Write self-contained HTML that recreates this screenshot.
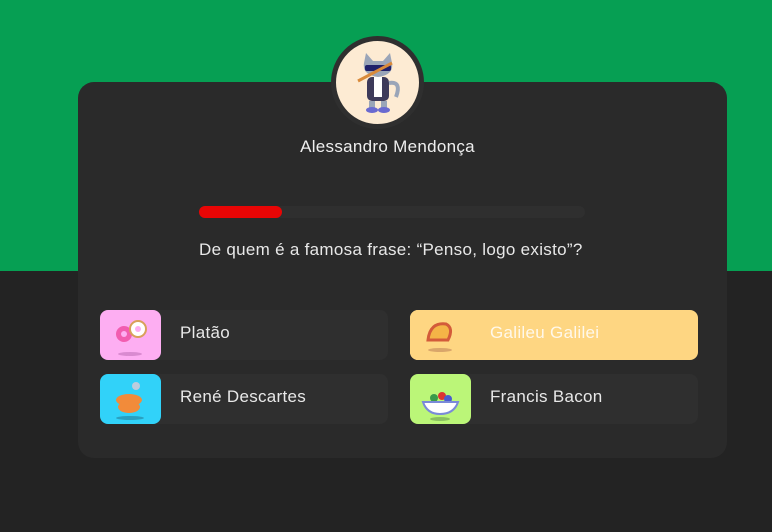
<!DOCTYPE html>
<html><head><meta charset="utf-8"><style>
*{margin:0;padding:0;box-sizing:border-box}
body{width:772px;height:532px;background:#232323;position:relative;overflow:hidden;font-family:"Liberation Sans",sans-serif;letter-spacing:0.3px}
.green{position:absolute;left:0;top:0;width:772px;height:271px;background:#069f53}
.card{position:absolute;left:78px;top:82px;width:649px;height:376px;background:#2a2a2a;border-radius:16px}
.av{position:absolute;left:331px;top:36px;width:93px;height:93px;border-radius:50%;background:#fdebd3;border:5px solid #2f2f2f}
.name{position:absolute;left:0;width:772px;top:137px;padding-left:3px;text-align:center;color:#eee;font-size:17px}
.bar{position:absolute;left:199px;top:206px;width:386px;height:12px;border-radius:6px;background:#2f2f2f}
.bar i{position:absolute;left:0;top:0;width:83px;height:12px;border-radius:6px;background:#e80505}
.q{position:absolute;left:199px;top:240px;color:#e8e8e8;font-size:17px;white-space:nowrap}
.opt{position:absolute;width:288px;height:50px;border-radius:8px;background:#2f2f2f;color:#e8e8e8;font-size:17px}
.opt .ic{position:absolute;left:0;top:0;width:61px;height:50px;border-radius:8px}
.opt span{position:absolute;left:80px;top:13px}
</style></head><body>
<div class="green"></div>
<div class="card"></div>
<div class="av"><svg width="83" height="83" viewBox="0 0 83 83">
<path d="M28 22 L30 12 L37 20 L47 20 L54 12 L56 22 Q58 34 42 36 Q26 34 28 22Z" fill="#9aa5b8"/>
<rect x="29" y="24" width="26" height="6" rx="2" fill="#20206a"/>
<rect x="31" y="36" width="22" height="24" rx="5" fill="#3d3a5a"/>
<rect x="38" y="36" width="8" height="20" fill="#fff"/>
<rect x="33" y="60" width="6" height="8" fill="#9aa5b8"/><rect x="45" y="60" width="6" height="8" fill="#9aa5b8"/>
<ellipse cx="36" cy="69" rx="6" ry="3" fill="#6a6ad0"/><ellipse cx="48" cy="69" rx="6" ry="3" fill="#6a6ad0"/>
<path d="M53 42 Q66 40 60 56" stroke="#9aa5b8" stroke-width="4" fill="none"/>
<line x1="22" y1="40" x2="56" y2="22" stroke="#d98a3a" stroke-width="3"/>
</svg></div>
<div class="name">Alessandro Mendonça</div>
<div class="bar"><i></i></div>
<div class="q">De quem é a famosa frase: “Penso, logo existo”?</div>
<div class="opt" style="left:100px;top:310px"><div class="ic" style="background:#fdaef2"><svg width="61" height="50"><circle cx="24" cy="24" r="8" fill="#f25db0"/><circle cx="24" cy="24" r="3" fill="#fdaef2"/><circle cx="38" cy="19" r="8" fill="#fff" stroke="#d9a05a" stroke-width="2"/><circle cx="38" cy="19" r="3" fill="#fdaef2"/><ellipse cx="30" cy="44" rx="12" ry="2" fill="#d98ad0"/></svg></div><span>Platão</span></div>
<div class="opt" style="left:410px;top:310px;background:#fed682"><div class="ic" style="background:#fed682"><svg width="61" height="50"><path d="M18 30 Q20 12 36 14 Q44 18 38 30 Z" fill="#f4b447" stroke="#d35b3a" stroke-width="3"/><ellipse cx="30" cy="40" rx="12" ry="2" fill="#d9a66a"/></svg></div><span style="color:#fff8ea">Galileu Galilei</span></div>
<div class="opt" style="left:100px;top:374px"><div class="ic" style="background:#31d2f9"><svg width="61" height="50"><ellipse cx="29" cy="26" rx="13" ry="6" fill="#f28b3a"/><ellipse cx="29" cy="33" rx="11" ry="6" fill="#f28b3a"/><circle cx="36" cy="12" r="4" fill="#bcd"/><ellipse cx="30" cy="44" rx="14" ry="2" fill="#2aa0c0"/></svg></div><span>René Descartes</span></div>
<div class="opt" style="left:410px;top:374px"><div class="ic" style="background:#bbf678"><svg width="61" height="50"><circle cx="24" cy="24" r="4" fill="#3a9a4a"/><circle cx="32" cy="22" r="4" fill="#d33"/><circle cx="38" cy="25" r="4" fill="#4a5acf"/><path d="M13 28 H48 Q44 40 30 40 Q17 40 13 28Z" fill="#fff" stroke="#7a8ad8" stroke-width="2"/><ellipse cx="30" cy="45" rx="10" ry="2" fill="#8ac060"/></svg></div><span>Francis Bacon</span></div>
</body></html>
